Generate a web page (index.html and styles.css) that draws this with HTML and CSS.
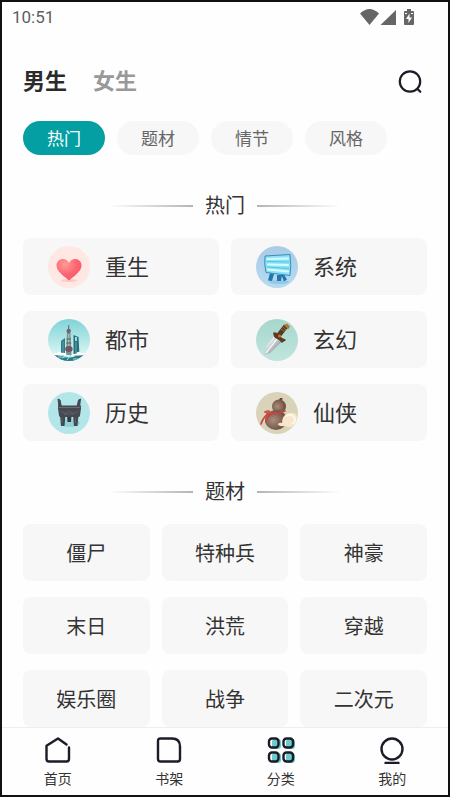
FILE: index.html
```
<!DOCTYPE html>
<html lang="zh-CN">
<head>
    <meta charset="UTF-8">
    <meta name="viewport" content="width=device-width, initial-scale=1.0">
    <title>分类</title>
    <link rel="stylesheet" href="styles.css">
</head>
<body>
    <div class="status-bar">
        <span class="time">10:51</span>
        <svg class="status-icons" width="56" height="18" viewBox="0 0 56 18" fill="#666">
            <path d="M0 5.5Q9.500-3.500 19 5.500L9.500 17Z"/>
            <path d="M36 2V17H20.500Z"/>
            <path d="M47 1h4v2h2q1 0 1 1v12q0 1-1 1h-8q-1 0-1-1V4q0-1 1-1h2z"/>
            <path d="M49.500 5.500L46 11h2.500v4L52 9.500h-2.500z" fill="#fff"/>
            <path d="M45 5.500h2M51 5.500h2" stroke="#fff"/>
        </svg>
    </div>

    <header class="top-bar">
        <div class="tabs">
            <button class="tab active">男生</button>
            <button class="tab">女生</button>
        </div>
        <button class="search-button" aria-label="搜索">
            <svg width="26" height="26" viewBox="0 0 26 26" fill="none" stroke="#1b1c28" stroke-width="2.2" stroke-linecap="round">
                <circle cx="13" cy="12.500" r="10.200"/>
                <path d="M20.500 20L23.300 22.800"/>
            </svg>
        </button>
    </header>

    <div class="chips">
        <button class="chip active">热门</button>
        <button class="chip">题材</button>
        <button class="chip">情节</button>
        <button class="chip">风格</button>
    </div>

    <main class="content">
        <h2 class="section-title">热门</h2>
        <div class="hot-grid">
            <a href="#" class="hot-card">
                <svg class="hot-icon" viewBox="0 0 42 42">
                    <defs>
                        <radialGradient id="heart" cx="35%" cy="25%" r="80%">
                            <stop offset="0" stop-color="#ff9a98"/>
                            <stop offset=".6" stop-color="#fb6470"/>
                            <stop offset="1" stop-color="#f8566a"/>
                        </radialGradient>
                    </defs>
                    <circle cx="21" cy="21" r="21" fill="#ffe7e4"/>
                    <ellipse cx="21" cy="34.500" rx="8" ry="1.500" fill="#fbc9c6"/>
                    <path d="M21 34.500C18 31.500 8.500 26 8.500 19.500C8.500 12 18 10.500 21 17C24 10.500 33.500 12 33.500 19.500C33.500 26 24 31.500 21 34.500Z" fill="url(#heart)"/>
                </svg>
                <span>重生</span>
            </a>
            <a href="#" class="hot-card">
                <svg class="hot-icon" viewBox="0 0 42 42">
                    <defs>
                        <linearGradient id="sky" x1="0" y1="0" x2="0" y2="1">
                            <stop offset="0" stop-color="#a9cbe6"/>
                            <stop offset="1" stop-color="#b5dbf2"/>
                        </linearGradient>
                    </defs>
                    <circle cx="21" cy="21" r="21" fill="url(#sky)"/>
                    <ellipse cx="23" cy="36" rx="10" ry="2" fill="#94c8e6"/>
                    <path d="M14 27l4 1-2 7-4-.5zM21 29h5l-1 6h-4zM25 28l3 .5 3 5-3 2z" fill="#1d78ac"/>
                    <path d="M9 10L34 8.500Q35.500 20 34 29.500L10 26.500Q8 18 9 10Z" fill="#8be2f5" stroke="#388dbb" stroke-width="1" stroke-linejoin="round"/>
                    <path d="M11.500 13L32 12.500M12 18.500L32 19M12 23.500L32 25.500" stroke="#d5faff" stroke-width="2.200" stroke-linecap="round"/>
                    <path d="M11 15.500L33 16M11 21L33 22.500" stroke="#43bce0" stroke-width=".8"/>
                </svg>
                <span>系统</span>
            </a>
            <a href="#" class="hot-card">
                <svg class="hot-icon" viewBox="0 0 42 42">
                    <defs>
                        <linearGradient id="dusk" x1="0" y1="0" x2="0" y2="1">
                            <stop offset="0" stop-color="#7fd3d8"/>
                            <stop offset=".8" stop-color="#d3f3f1"/>
                        </linearGradient>
                        <clipPath id="round"><circle cx="21" cy="21" r="21"/></clipPath>
                    </defs>
                    <g clip-path="url(#round)">
                        <rect width="42" height="42" fill="url(#dusk)"/>
                        <path d="M13 22l4-3v18h-4z" fill="#2c7b85"/>
                        <path d="M15 22v14" stroke="#56a6a9"/>
                        <path d="M25.500 16l5 2 1 19h-6z" fill="#256d7c"/>
                        <path d="M27 18h2v4h-2z" fill="#a2dad7"/>
                        <path d="M28 23v12" stroke="#6bb1b4"/>
                        <path d="M20.700 6v7" stroke="#5c6670" stroke-width="1"/>
                        <circle cx="20.700" cy="12" r="2.200" fill="#6b6471"/>
                        <path d="M19 14h3.500l1 22h-5.500z" fill="#779193"/>
                        <path d="M20.800 15v14" stroke="#d4c3a2" stroke-width="1"/>
                        <path d="M18.500 20h4.500M18.300 24h5" stroke="#3c6470"/>
                        <ellipse cx="20.900" cy="30" rx="3.800" ry="3" fill="#735465"/>
                        <path d="M0 37Q8 34 14 37T28 37T42 35V42H0Z" fill="#247d88"/>
                        <path d="M5 36q1-3 4-2q2-3 5 0q4-1 5 3zM23 37q2-3 5-2q2-4 5-1q4-1 5 2z" fill="#fff"/>
                        <path d="M14 39l5-2M19 41l4-5M25 40h5M10 38h4" stroke="#a5dce2" stroke-width="1"/>
                    </g>
                </svg>
                <span>都市</span>
            </a>
            <a href="#" class="hot-card">
                <svg class="hot-icon" viewBox="0 0 42 42">
                    <defs>
                        <linearGradient id="mint" x1="0" y1="0" x2="0" y2="1">
                            <stop offset="0" stop-color="#a6d7cc"/>
                            <stop offset="1" stop-color="#c0e5de"/>
                        </linearGradient>
                        <linearGradient id="blade" x1="0" y1="0" x2="1" y2="1">
                            <stop offset=".3" stop-color="#eef0f1"/>
                            <stop offset=".7" stop-color="#969fa4"/>
                        </linearGradient>
                    </defs>
                    <circle cx="21" cy="21" r="21" fill="url(#mint)"/>
                    <path d="M19 16l7.500 6L14 34l-6 2 2-4 .5-5z" fill="url(#blade)"/>
                    <path d="M21 20L10 34" stroke="#fff" stroke-width="1.200"/>
                    <path d="M23 16L30 7" stroke="#5b3825" stroke-width="5"/>
                    <path d="M25 10l4 3M27 8l3 3" stroke="#a46a2d" stroke-width="1"/>
                    <path d="M18 14q3 0 5 3t6 4l-3 2q-2-3-5-4t-3-5z" fill="#613820" stroke="#613820" stroke-width="1.500" stroke-linejoin="round"/>
                    <circle cx="23.500" cy="17" r="1.500" fill="#bb7a32"/>
                    <path d="M28 6l3-1.500 3 3-2 3z" fill="#b17831"/>
                </svg>
                <span>玄幻</span>
            </a>
            <a href="#" class="hot-card">
                <svg class="hot-icon" viewBox="0 0 42 42">
                    <circle cx="21" cy="21" r="21" fill="#b2e6e9"/>
                    <ellipse cx="22" cy="31" rx="10" ry="4" fill="#93d1d6"/>
                    <path d="M10 7l2 1 1.500 7h-2.500zM32.500 7l-2 1-1.500 7h2.500z" fill="#444850" stroke="#444850" stroke-linejoin="round"/>
                    <path d="M19 23h4.500l-.5 7h-3.500z" fill="#363941"/>
                    <path d="M12 23h5.500l-1 11h-3.500zM25 23h5.500l-1 11h-3.500z" fill="#424750"/>
                    <path d="M10 13.500h23v3l-1 7q0 1.500-2 1.500H13q-2 0-2-1.500l-1-7z" fill="#454951"/>
                    <path d="M10.500 15.500h22" stroke="#6a6e73" stroke-width="1"/>
                    <path d="M13 19l3 2h3l2-2 3 2h3l3-2M14 26v5M27.500 26v5M16 22h10" fill="none" stroke="#65686d" stroke-width=".8"/>
                </svg>
                <span>历史</span>
            </a>
            <a href="#" class="hot-card">
                <svg class="hot-icon" viewBox="0 0 42 42">
                    <defs>
                        <radialGradient id="gourd" cx="38%" cy="50%" r="65%">
                            <stop offset="0" stop-color="#ab8d7c"/>
                            <stop offset="1" stop-color="#65463b"/>
                        </radialGradient>
                    </defs>
                    <circle cx="21" cy="21" r="21" fill="#d9d3ba"/>
                    <path d="M22.500 9l1.500-3 2.500 0-.5 4z" fill="#66473b"/>
                    <circle cx="23" cy="14.500" r="7" fill="url(#gourd)"/>
                    <ellipse cx="20" cy="28" rx="11" ry="10" fill="url(#gourd)"/>
                    <path d="M9 20Q17 24 29 19M14 21Q8 23 5 32M16 22Q10 25 10 30" fill="none" stroke="#c9443e" stroke-width="1.700" stroke-linecap="round"/>
                    <path d="M14 18.500q-4-1-5 1t5 2z" fill="#ce514a"/>
                    <path d="M22 33q0-3 4-2q0-9 8-10q6-1 7 4q0 4-3 8q-4 4-8 1q-4 1-8-1z" fill="#f7e6cc"/>
                    <path d="M30 24q5-3 8 1t-2 7" fill="none" stroke="#fff7e8" stroke-width="2"/>
                </svg>
                <span>仙侠</span>
            </a>
        </div>

        <h2 class="section-title">题材</h2>
        <div class="theme-grid">
            <a href="#" class="theme-card">僵尸</a>
            <a href="#" class="theme-card">特种兵</a>
            <a href="#" class="theme-card">神豪</a>
            <a href="#" class="theme-card">末日</a>
            <a href="#" class="theme-card">洪荒</a>
            <a href="#" class="theme-card">穿越</a>
            <a href="#" class="theme-card">娱乐圈</a>
            <a href="#" class="theme-card">战争</a>
            <a href="#" class="theme-card">二次元</a>
        </div>
    </main>

    <nav class="bottom-nav">
        <a href="#" class="nav-item">
            <svg class="nav-icon" viewBox="0 0 28 28">
                <path d="M22.500 8.500L14 2.500L2.500 9.800V23Q2.500 25.500 5 25.500H22.500Q25 25.500 25 23V11.500"/>
            </svg>
            <span>首页</span>
        </a>
        <a href="#" class="nav-item">
            <svg class="nav-icon" viewBox="0 0 28 28">
                <path d="M5.500 2.500H17Q25 2.500 25 10.500V23Q25 25.500 22.500 25.500H5.500Q3 25.500 3 23V5Q3 2.500 5.500 2.500Z"/>
            </svg>
            <span>书架</span>
        </a>
        <a href="#" class="nav-item">
            <svg class="nav-icon" viewBox="0 0 28 28">
                <g class="nav-fill">
                    <rect x="5" y="3" width="9" height="10" rx="3"/>
                    <rect x="19" y="3" width="9" height="10" rx="3"/>
                    <rect x="5" y="17" width="9" height="10" rx="3"/>
                    <rect x="19" y="17" width="9" height="10" rx="3"/>
                </g>
                <rect x="2" y="2.500" width="9.500" height="9" rx="3"/>
                <rect x="16.500" y="2.500" width="9.500" height="9" rx="3"/>
                <rect x="2" y="16.500" width="9.500" height="9" rx="3"/>
                <rect x="16.500" y="16.500" width="9.500" height="9" rx="3"/>
            </svg>
            <span>分类</span>
        </a>
        <a href="#" class="nav-item">
            <svg class="nav-icon" viewBox="0 0 28 28">
                <circle cx="14" cy="13" r="10.500"/>
                <path d="M7.500 27H20.500"/>
            </svg>
            <span>我的</span>
        </a>
    </nav>
</body>
</html>
```
FILE: styles.css
```
* {
    box-sizing: border-box;
}

body {
    margin: 0;
    height: 100vh;
    display: flex;
    flex-direction: column;
    border: 2px solid #111;
    background-color: #fefefe;
    color: #333;
    font-family: Roboto, "Noto Sans CJK SC", sans-serif;
}

button {
    padding: 0;
    border: none;
    background: none;
    font-family: inherit;
    cursor: pointer;
}

a {
    color: inherit;
    text-decoration: none;
}

svg {
    display: block;
}

.status-bar {
    display: flex;
    justify-content: space-between;
    align-items: center;
    height: 30px;
    padding: 0 32px 0 10px;
    color: #5f5f5f;
    font-size: 17px;
}

.status-icons {
    overflow: visible;
}

.top-bar {
    display: flex;
    justify-content: space-between;
    align-items: center;
    padding: 33px 21px 22px;
}

.tabs {
    display: flex;
    gap: 26px;
}

.tab {
    color: #999;
    font-size: 22px;
    line-height: 34px;
    font-weight: 700;
}

.tab.active {
    color: #2b2b2b;
}

.search-button {
    margin-right: 4px;
}

.chips {
    display: flex;
    gap: 12px;
    padding: 0 21px;
}

.chip {
    width: 82px;
    height: 34px;
    padding-bottom: 2px;
    border-radius: 17px;
    background-color: #f7f7f7;
    color: #666;
    font-size: 17px;
}

.chip.active {
    background-color: #039fa3;
    color: #fff;
}

.content {
    flex: 1;
    min-height: 0;
    padding: 0 21px;
    overflow-y: auto;
    scrollbar-width: none;
}

.section-title {
    display: flex;
    justify-content: center;
    align-items: center;
    gap: 12px;
    margin: 36px 0 17px;
    font-size: 20px;
    line-height: 30px;
    font-weight: 400;
}

.section-title::before,
.section-title::after {
    content: "";
    width: 84px;
    height: 2px;
    background: linear-gradient(to left, #b4b4b4, #fefefe);
}

.section-title::after {
    background: linear-gradient(to right, #b4b4b4, #fefefe);
}

.hot-grid {
    display: grid;
    grid-template-columns: repeat(2, 1fr);
    gap: 16px 12px;
}

.hot-card {
    display: flex;
    align-items: center;
    gap: 15px;
    height: 57px;
    padding-left: 25px;
    border-radius: 8px;
    background-color: #f7f7f7;
    font-size: 22px;
}

.hot-card span {
    padding-bottom: 3px;
}

.hot-icon {
    width: 42px;
    height: 42px;
}

.theme-grid {
    display: grid;
    grid-template-columns: repeat(3, 1fr);
    gap: 16px 12px;
}

.theme-card {
    display: flex;
    justify-content: center;
    align-items: center;
    height: 57px;
    border-radius: 8px;
    background-color: #f7f7f7;
    font-size: 20px;
}

.bottom-nav {
    display: grid;
    grid-template-columns: repeat(4, 1fr);
    border-top: 1px solid #eee;
    background-color: #fefefe;
}

.nav-item {
    display: flex;
    flex-direction: column;
    align-items: center;
    gap: 5px;
    padding: 8px 0 6px;
    font-size: 14px;
    line-height: 20px;
}

.nav-icon {
    width: 28px;
    height: 28px;
    fill: none;
    stroke: #1b1c28;
    stroke-width: 2.4;
    stroke-linecap: round;
    stroke-linejoin: round;
}

.nav-fill {
    fill: #69cdce;
    stroke: none;
}
```
